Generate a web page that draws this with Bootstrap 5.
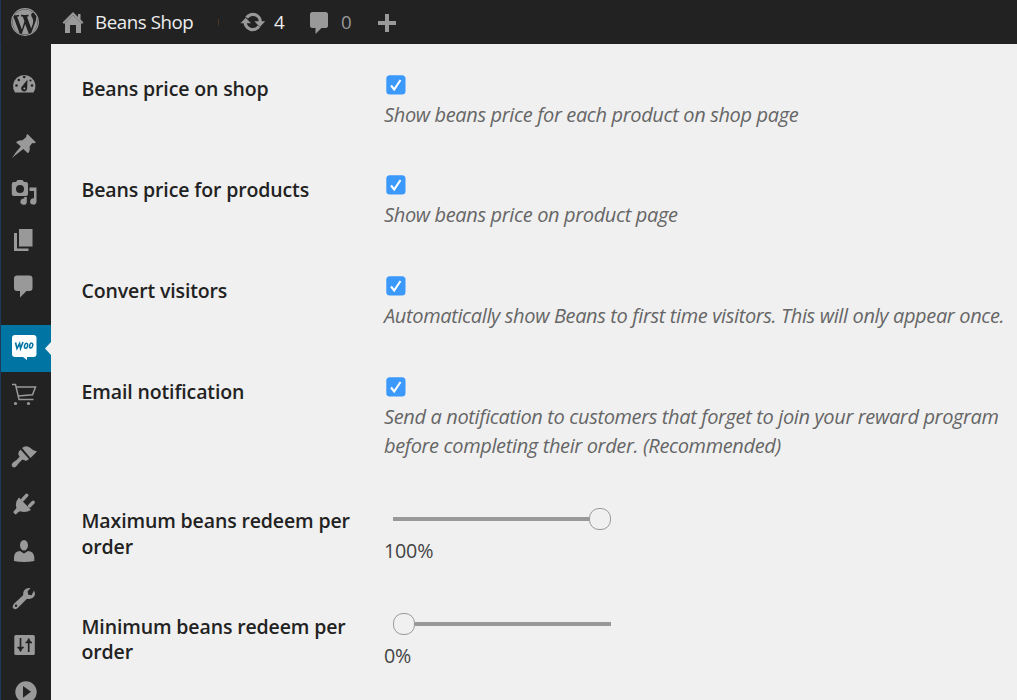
<!DOCTYPE html>
<html lang="en">
<head>
<meta charset="utf-8">
<title>Beans Shop</title>
<link rel="stylesheet" href="https://cdn.jsdelivr.net/npm/bootstrap@5.3.0/dist/css/bootstrap.min.css">
<style>
body{font-family:"Open Sans",sans-serif;background:#f0f0f0;color:#444;font-size:19.7px;height:700px}
.adminbar{height:44px;background:#222;color:#eee;border-left:1px solid #1d3358}
.adminbar svg,.side svg{display:block;fill:#999;flex:none}
.adminbar span{line-height:44px;white-space:nowrap}
.site{font-size:18.7px;width:97px;margin-left:11px;letter-spacing:-.42px}
.count{font-size:18.7px;width:24px}
.count.none{color:#999}
.side{width:51px;background:#222;padding-top:17px;border-left:1px solid #1b3a5c;height:656px;overflow:hidden}
.side .on{background:#0074a2}
.gap-a{margin-top:15px}.gap-b{margin-top:14px}
.settings{padding:30.500px 0 0 30px}
.opt{height:100.9px}
.opt.tall{height:129.500px}
.opt.slide{height:105.300px}
.opt-name{width:303px;padding-left:.5px;padding-right:28px;font-weight:600;color:#222;line-height:25.5px;padding-top:1.6px;font-size:19.5px;letter-spacing:-.13px}
.tick{width:20px;height:20px;margin-left:1.500px;display:block}
.desc{font-style:italic;color:#666;line-height:29px;margin:5px 0 0;white-space:nowrap;font-size:20px;letter-spacing:-.36px}
.rail{width:218px;height:24px;margin:0 0 0 8.500px;display:flex;align-items:center}
.rail i{flex:1;height:4px;background:#999}
.rail b{width:22px;height:22px;border:1.5px solid #999;border-radius:10px;background:#f0f0f0}
.val{line-height:29px;margin-top:5px;font-size:19.7px;letter-spacing:-.2px}
</style>
</head>
<body class="overflow-hidden">
<header class="adminbar d-flex">
<svg width="83" height="44" viewBox="1 0 83 44"><circle cx="25" cy="22" r="13.300" fill="none" stroke="#999" stroke-width="1.300"/><path transform="translate(11 8) scale(1.4)" d="M7.780 15.370L4.370 6.220c.55-.02 1.170-.08 1.170-.08.5-.06.44-1.130-.06-1.110 0 0-1.450.11-2.370.11-.18 0-.37 0-.58-.01C4.120 2.690 6.870 1.110 10 1.110c2.330 0 4.450.87 6.050 2.340-.68-.11-1.650.39-1.650 1.580 0 .74.45 1.360.9 2.100.35.61.55 1.360.55 2.460 0 1.490-1.400 5-1.400 5l-3.030-8.370c.54-.02.82-.17.82-.17.5-.05.44-1.250-.06-1.220 0 0-1.440.12-2.380.12-.87 0-2.330-.12-2.330-.12-.5-.03-.56 1.200-.06 1.220l.92.08 1.260 3.410zM17.410 10c.24-.64.74-1.870.43-4.250.7 1.290 1.050 2.710 1.050 4.250 0 3.290-1.730 6.240-4.400 7.780.97-2.590 1.940-5.200 2.920-7.780zM6.100 18.090C3.120 16.650 1.110 13.530 1.110 10c0-1.300.23-2.480.72-3.590C3.250 10.300 4.670 14.200 6.100 18.090zm4.030-6.630l2.580 6.980c-.86.29-1.760.45-2.710.45-.79 0-1.570-.11-2.290-.33.81-2.380 1.620-4.740 2.420-7.100z"/><path d="M73 15l8 8v10h-5v-8h-6v8h-5V23z"/><path d="M63.300 23.200L73 13.500l9.700 9.700" fill="none" stroke="#999" stroke-width="2.200"/><path d="M78 14h2.500v6L78 17.500z"/></svg>
<span class="site">Beans Shop</span>
<svg width="82" height="44" viewBox="192 0 82 44"><path d="M218.500 19v7" stroke="#4a3422"/><path d="M246.600 17.700a7.500 7.500 0 0 1 13.700 4.800M245.200 21.500a7.500 7.500 0 0 0 13.700 4.800" fill="none" stroke="#999" stroke-width="3.300"/><path d="M240.500 23.300l5.200-5.600 5.300 5.600zM254.300 21.300h10.900l-5.300 5.600z"/></svg>
<span class="count">4</span>
<svg width="43" height="44" viewBox="298 0 43 44"><path d="M312.500 12h13q2.500 0 2.500 2.500v11q0 2.500-2.500 2.500h-4l-6 6v-6h-3q-2.500 0-2.500-2.500v-11q0-2.500 2.500-2.500z"/></svg>
<span class="count none">0</span>
<svg width="45" height="44" viewBox="365 0 45 44"><path d="M385 14h4v7h7v4h-7v7h-4v-7h-7v-4h7z"/></svg>
</header>
<div class="d-flex">
<nav class="side flex-shrink-0">
<svg width="50" height="47" viewBox="1 61 50 47"><path d="M15 92.500a11.200 11.200 0 1 1 18.500 0z"/><g fill="#222"><circle cx="16.500" cy="85.500" r="1.300"/><circle cx="18.800" cy="80" r="1.300"/><circle cx="24.200" cy="77" r="1.300"/><circle cx="32" cy="85.500" r="1.300"/><circle cx="30.500" cy="80.500" r="1.100"/><path d="M27.500 79.500l-.4 9.500a3 3 0 1 1-4.700-3z"/></g><circle cx="24.400" cy="88.500" r="1" fill="#999"/></svg>
<svg class="gap-a" width="50" height="47" viewBox="1 123 50 47"><path d="M27.500 134l8.500 8.500q-2 1.200-3.800.6l-2.700 3.600q1 4.300-1.600 6.600l-4.600-4.300Q18 153 12 158q4-6.500 8.800-11.500L16 142.300q2.600-2.600 6.500-2l3.800-3.200q-.6-1.600 1.200-3.100z"/></svg>
<svg width="50" height="47" viewBox="1 170 50 47"><path fill-rule="evenodd" d="M14 182h2l1.500-2h5l1.500 2h2q2 0 2 2v10q0 2-2 2H14q-2.200 0-2.200-2v-10q0-2 2.200-2zm6 3a4 4 0 1 0 0 8 4 4 0 0 0 0-8z"/><path d="M29.500 187.500h7v14a3.200 3.200 0 1 1-2.500-3.200V191h-4.500zM26.800 197v5a3.200 3.200 0 1 1-2.500-3.500V197z"/></svg>
<svg width="50" height="47" viewBox="1 217 50 47"><path d="M19 229h13.500v17.500H19zM14 233h3v15.500h11.500v2.500H14z"/></svg>
<svg width="50" height="47" viewBox="1 264 50 47"><path d="M17 275.500h12.500q3 0 3 3v9.500q0 3-3 3h-3l-6.500 6.500v-6.500h-3q-3 0-3-3v-9.500q0-3 3-3z"/></svg>
<div class="gap-b on"><svg width="50" height="47" viewBox="1 325 50 47"><path fill="#fff" d="M15 335h18.500q3 0 3 3v16q0 3-3 3H27v3l-4-3h-8q-3 0-3-3v-16q0-3 3-3z"/><path fill="#f0f0f0" d="M51 342v13l-6-6.500z"/><path fill="none" stroke="#0074a2" stroke-width="1.600" d="M15.500 342.500l1.500 6 2.600-5 .9 5 2.500-6.500"/><g fill="none" stroke="#0074a2" stroke-width="1.500"><ellipse cx="26" cy="345.800" rx="1.500" ry="2.500" transform="rotate(15 26 346)"/><ellipse cx="31" cy="345.500" rx="1.500" ry="2.500" transform="rotate(15 31 346)"/></g></svg></div>
<svg width="50" height="47" viewBox="1 372 50 47"><path fill="none" stroke="#999" stroke-width="1.500" d="M12 384.500h3.500l3.500 15h14.500M16.500 387h19l-3 7.800L18 396"/><circle cx="15.500" cy="403.500" r="1.600"/><circle cx="28.500" cy="403.500" r="1.600"/></svg>
<svg class="gap-a" width="50" height="47" viewBox="1 434 50 47"><path d="M22 448q4-3.500 8.500 0 2.500 3 6.500 3.500l-6.500 6.500zM20.500 449.500l8.500 9.500q-2.500 2.700-4.500 1.200l-2-.8q-3.500 3-5.500 6.200-2.500 3-4.500 1.200t.8-4.500q4-2.500 6.300-5.500l-1.300-2.500q-.2-2.500 2.200-4.800z"/></svg>
<svg width="50" height="47" viewBox="1 481 50 47"><path d="M19 497.500l12 12.500q-5.500 3.300-11 1.300l-2.500 1.500q-1.500 2.700-3.300.8t.8-3.500l1.500-2.400q-2-5.500 2.500-10.200z"/><path d="M22.800 499.500l4-4.300M29.500 506l3.700-3.700" stroke="#999" stroke-width="3.400" stroke-linecap="round"/></svg>
<svg width="50" height="47" viewBox="1 528 50 47"><ellipse cx="24" cy="545.200" rx="4" ry="5.200"/><path d="M14 561v-4q.5-6 6-6l4 2.500 4-2.500q5.500 0 6.300 6v4q-10 2-20.300 0z"/></svg>
<svg width="50" height="47" viewBox="1 575 50 47"><path fill-rule="evenodd" d="M34 590.500q2.500 5-1.500 7.500-3 1.500-5.500.8l-9 9q-2.500 2.500-4.500.7t.5-4.700l9.100-8.600q-.6-3 1.400-5.200 2.200-2.600 6-2l-3 3.500.8 3.300 3.300.5zM16 604.500a1.200 1.200 0 1 0 0 2.400 1.200 1.200 0 0 0 0-2.400z"/></svg>
<svg width="50" height="47" viewBox="1 622 50 47"><rect x="14.300" y="635" width="20.500" height="20" rx="1.500"/><path fill="none" stroke="#222" stroke-width="1.700" d="M20.500 638v13.500M17.300 647.500h6.500M28.700 638.500V652M25.500 642.500h6.500"/><path fill="#222" d="M18 648h5l-2.500 3.500zM26.200 642h5l-2.500-3.500z"/></svg>
<svg width="50" height="47" viewBox="1 669 50 47"><circle cx="26" cy="692" r="10.700"/><path fill="#222" d="M23 686l8 5.800-8 6z"/></svg>
</nav>
<main class="settings flex-grow-1">
<div class="opt d-flex"><div class="opt-name">Beans price on shop</div><div><svg class="tick" viewBox="0 0 20 20"><rect x=".3" y=".3" width="19.200" height="19.200" rx="3.500" fill="#3b99fc"/><path d="M5 10.500l3.200 4L14.500 5" fill="none" stroke="#fff" stroke-width="2.100"/></svg><p class="desc">Show beans price for each product on shop page</p></div></div>
<div class="opt d-flex"><div class="opt-name">Beans price for products</div><div><svg class="tick" viewBox="0 0 20 20"><rect x=".3" y=".3" width="19.200" height="19.200" rx="3.500" fill="#3b99fc"/><path d="M5 10.500l3.200 4L14.500 5" fill="none" stroke="#fff" stroke-width="2.100"/></svg><p class="desc">Show beans price on product page</p></div></div>
<div class="opt d-flex"><div class="opt-name">Convert visitors</div><div><svg class="tick" viewBox="0 0 20 20"><rect x=".3" y=".3" width="19.200" height="19.200" rx="3.500" fill="#3b99fc"/><path d="M5 10.500l3.200 4L14.500 5" fill="none" stroke="#fff" stroke-width="2.100"/></svg><p class="desc">Automatically show Beans to first time visitors. This will only appear once.</p></div></div>
<div class="opt tall d-flex"><div class="opt-name">Email notification</div><div><svg class="tick" viewBox="0 0 20 20"><rect x=".3" y=".3" width="19.200" height="19.200" rx="3.500" fill="#3b99fc"/><path d="M5 10.500l3.200 4L14.500 5" fill="none" stroke="#fff" stroke-width="2.100"/></svg><p class="desc">Send a notification to customers that forget to join your reward program<br>before completing their order. (Recommended)</p></div></div>
<div class="opt slide d-flex"><div class="opt-name">Maximum beans redeem per order</div><div><div class="rail"><i></i><b></b></div><div class="val">100%</div></div></div>
<div class="opt slide d-flex"><div class="opt-name">Minimum beans redeem per order</div><div><div class="rail"><b></b><i></i></div><div class="val">0%</div></div></div>
</main>
</div>
<script src="https://cdn.jsdelivr.net/npm/bootstrap@5.3.0/dist/js/bootstrap.bundle.min.js"></script>
</body>
</html>
